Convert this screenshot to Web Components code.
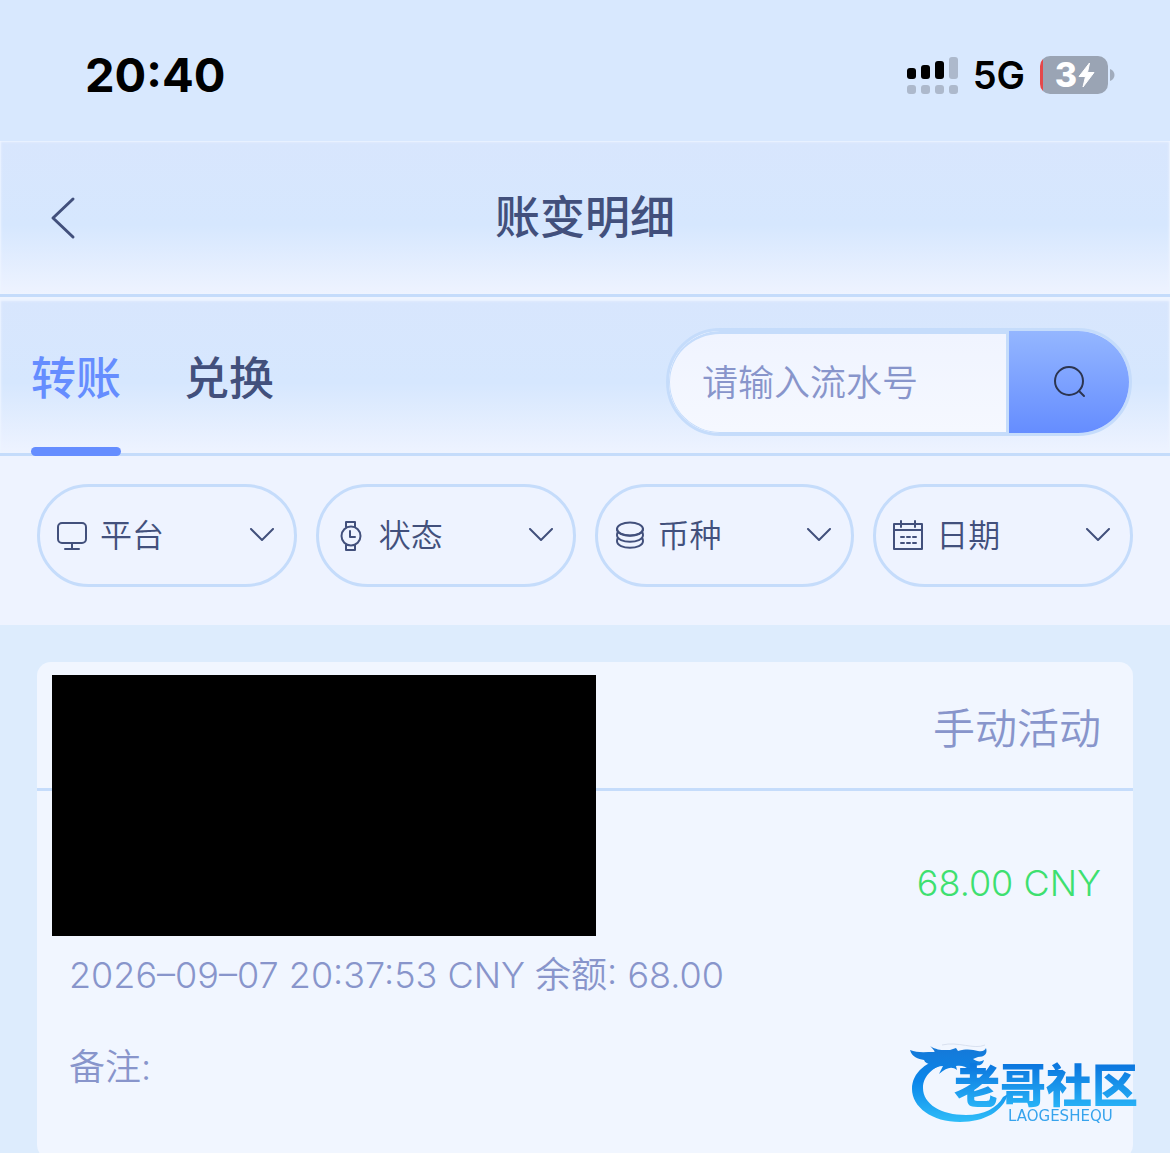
<!DOCTYPE html>
<html lang="zh-CN">
<head>
<meta charset="utf-8">
<meta name="viewport" content="width=device-width, initial-scale=1">
<title>账变明细</title>
<style>
  :root {
    --line: #c5dcfb;
    --ink: #42507c;
    --muted: #8895cb;
    --accent: #658dff;
    --panel: linear-gradient(to bottom, #d8e6fd 0%, #d6e7fe 55%, #eef3ff 100%);
  }
  html, body { margin: 0; height: 100%; }
  body {
    font-family: Inter, "Noto Sans CJK SC", sans-serif;
    color: var(--ink);
    background: #ddecfd;
    overflow: hidden;
  }
</style>
</head>
<body>
<account-page>
  <status-bar slot="top" time="20:40" network="5G" level="3"></status-bar>
  <nav-header slot="top">账变明细</nav-header>
  <tab-strip slot="top">
    <tab-item active>转账</tab-item>
    <tab-item>兑换</tab-item>
    <search-box slot="end" placeholder="请输入流水号"></search-box>
  </tab-strip>
  <filter-row slot="top">
    <filter-select icon="monitor" label="平台"></filter-select>
    <filter-select icon="watch" label="状态"></filter-select>
    <filter-select icon="coins" label="币种"></filter-select>
    <filter-select icon="calendar" label="日期"></filter-select>
  </filter-row>
  <record-card>
    <span slot="kind">手动活动</span>
    <span slot="amount">68.00 CNY</span>
    <span slot="detail">2026–09–07 20:37:53 CNY 余额: 68.00</span>
    <span slot="remark">备注:</span>
  </record-card>
</account-page>
<brand-mark></brand-mark>

<script>
  const define = (name, render) => {
    customElements.define(name, class extends HTMLElement {
      connectedCallback() {
        if (this.shadowRoot) return;
        const root = this.attachShadow({ mode: 'open' });
        root.innerHTML = '<style>:host,*{box-sizing:border-box}svg{display:block;flex:none}button,input,select{font:inherit;color:inherit;margin:0}</style>' + render(this);
      }
    });
  };

  define('account-page', () => `
    <style>
      :host { display: flex; flex-direction: column; height: 100vh; }
      main { flex: 1; min-height: 0; overflow: auto; scrollbar-width: none; padding: 37px 37px 0; }
    </style>
    <slot name="top"></slot>
    <main><slot></slot></main>`);

  define('status-bar', el => `
    <style>
      :host { display: flex; flex: none; align-items: center; justify-content: space-between;
        height: 141px; padding: 8px 55px 0 85px; background: #d8e8fe; color: #000; }
      .time { font-size: 47px; font-weight: 700; }
      .right { display: flex; align-items: center; gap: 15px; }
      .net { font-size: 38px; font-weight: 600; }
      .battery { display: flex; align-items: center; gap: 1px; }
      .cell { display: flex; align-items: center; justify-content: center; gap: 1px; width: 68px; height: 38px; padding-left: 2px;
        border-radius: 10px; color: #fff; font-size: 34px; font-weight: 800;
        background: linear-gradient(to right, #e5484a 3px, #9aa4b4 3px); }
    </style>
    <span class="time">${el.getAttribute('time')}</span>
    <div class="right">
      <svg width="51" height="38" viewBox="0 0 51 38" aria-hidden="true">
        <g fill="#000"><rect y="12" width="9" height="11" rx="3"/><rect x="14" y="9" width="9" height="14" rx="3"/><rect x="28" y="5" width="9" height="18" rx="3"/></g>
        <g fill="#adb9cc"><rect x="42" y="1" width="9" height="22" rx="3"/><rect y="29" width="9" height="9" rx="3"/><rect x="14" y="29" width="9" height="9" rx="3"/><rect x="28" y="29" width="9" height="9" rx="3"/><rect x="42" y="29" width="9" height="9" rx="3"/></g>
      </svg>
      <span class="net">${el.getAttribute('network')}</span>
      <div class="battery">
        <div class="cell"><span>${el.getAttribute('level')}</span>
          <svg width="17" height="26" viewBox="0 0 17 26" aria-hidden="true"><path d="M11.500 1 1 14.500H7.500L5 25 16 10.500H9.500Z" fill="#fff" stroke="#fff" stroke-linejoin="round"/></svg>
        </div>
        <svg width="6" height="12" viewBox="1 0 6 12" aria-hidden="true"><path d="M2 0C8 2 8 10 2 12Z" fill="#a1acbd"/></svg>
      </div>
    </div>`);

  define('nav-header', () => `
    <style>
      :host { display: grid; flex: none; grid-template-columns: 1fr auto 1fr; align-items: center; height: 156px;
        padding: 0 45px; background: var(--panel); border-bottom: 3px solid var(--line);
        box-shadow: inset 0 0 2px 1px #eef4ff; }
      button { display: flex; width: 36px; height: 60px; padding: 0; border: 0; background: none; align-items: center; justify-content: center; }
      h1 { margin: 0; font-size: 45px; font-weight: 500; line-height: 60px; }
    </style>
    <button type="button" aria-label="返回">
      <svg width="26" height="44" viewBox="0 0 26 44"><path d="M23 3 3 22 23 41" fill="none" stroke="#42507c" stroke-width="3" stroke-linecap="round" stroke-linejoin="round"/></svg>
    </button>
    <h1><slot></slot></h1>`);

  define('tab-strip', () => `
    <style>
      :host { display: flex; flex: none; align-items: center; justify-content: space-between; height: 159px;
        padding: 0 38px 0 31px; background: var(--panel); border-bottom: 3px solid var(--line);
        box-shadow: inset 0 3px 2px 1px #eef4ff; }
      nav { display: flex; align-self: stretch; gap: 63px; margin-bottom: -3px; }
      .end { padding-top: 14px; }
    </style>
    <nav><slot></slot></nav>
    <div class="end"><slot name="end"></slot></div>`);

  define('tab-item', () => `
    <style>
      :host { display: flex; }
      button { display: flex; flex-direction: column; align-items: center; justify-content: space-between; padding: 52px 0 0;
        border: 0; background: none; font-size: 45px; font-weight: 500; line-height: 60px; color: var(--ink); }
      i { align-self: stretch; height: 9px; border-radius: 5px; }
      :host([active]) button { color: var(--accent); }
      :host([active]) i { background: var(--accent); }
    </style>
    <button type="button"><slot></slot><i></i></button>`);

  define('search-box', el => `
    <style>
      :host { display: block; }
      form { display: flex; width: 466px; height: 108px; border: 3px solid var(--line); border-radius: 54px; overflow: hidden; background: #eef4ff; }
      input { flex: 1; min-width: 0; height: 102px; padding: 0 32px; border: 1px solid var(--line); border-top-width: 3px; border-right-width: 3px;
        border-radius: 51px 0 0 51px; outline: 0; font-size: 36px; font-weight: 350; background: linear-gradient(#f0f4ff, #f5f8ff); color: var(--ink); }
      input::placeholder { color: var(--muted); opacity: 1; }
      button { display: flex; align-items: center; justify-content: center; width: 120px; padding: 0; border: 0;
        background: linear-gradient(#94b6ff, #658dff); }
    </style>
    <form>
      <input type="text" aria-label="流水号" placeholder="${el.getAttribute('placeholder')}">
      <button type="button" aria-label="搜索">
        <svg width="34" height="34" viewBox="0 0 34 34"><g fill="none" stroke="#2c3550" stroke-width="2" stroke-linecap="round"><circle cx="17" cy="16" r="14"/><path d="m27 26 5 5"/></g></svg>
      </button>
    </form>`);

  define('filter-row', () => `
    <style>
      :host { display: grid; flex: none; grid-template-columns: repeat(4, minmax(0, 1fr)); gap: 19px; padding: 28px 37px 38px; background: #eef3ff; }
    </style>
    <slot></slot>`);

  const icons = {
    monitor: '<rect x="2" y="3" width="28" height="20" rx="4"/><path d="M16 23v5M9 29h14"/>',
    watch: '<circle cx="16" cy="16" r="9.500"/><path d="M11 7V2h9v5M11 25v5h9v-5M15 11v6h5"/>',
    coins: '<ellipse cx="16" cy="9" rx="13" ry="6.500"/><path d="M3 9c0 9 26 9 26 0M4 12c-1 1-1 2-1 3 0 9 26 9 26 0 0-1 0-2-1-3M4 18c-1 1-1 2-1 3 0 9 26 9 26 0 0-1 0-2-1-3"/>',
    calendar: '<path d="M2 4h28v25H2ZM2 10h28M9 1v6M23 1v6M9 17h3M15 17h3M21 17h3M9 23h3M15 23h3M21 23h3"/>'
  };

  define('filter-select', el => `
    <style>
      :host { display: block; }
      label { display: flex; align-items: center; height: 103px; padding: 0 19px 0 16px; border: 3px solid var(--line); border-radius: 52px; }
      select { flex: 1; min-width: 0; height: 60px; margin-left: 12px; padding: 0; border: 0; outline: 0; appearance: none; background: none;
        font-size: 32px; font-weight: 350; color: var(--ink); }
    </style>
    <label>
      <svg width="32" height="32" viewBox="0 0 32 32" aria-hidden="true"><g fill="none" stroke="#42507c" stroke-width="2" stroke-linecap="round" stroke-linejoin="round">${icons[el.getAttribute('icon')]}</g></svg>
      <select aria-label="${el.getAttribute('label')}"><option>${el.getAttribute('label')}</option></select>
      <svg width="26" height="16" viewBox="0 0 26 16" aria-hidden="true"><path d="M2 1 13 12 24 1" fill="none" stroke="#42507c" stroke-width="2" stroke-linecap="round" stroke-linejoin="round"/></svg>
    </label>`);

  define('record-card', () => `
    <style>
      :host { display: block; position: relative; border-radius: 14px; background: #f1f6ff; color: var(--muted); font-weight: 350; }
      header { display: flex; align-items: center; justify-content: flex-end; height: 129px; padding: 0 32px; border-bottom: 3px solid var(--line); font-size: 42px; }
      .body { padding: 46px 32px; font-size: 36px; line-height: 92px; }
      .amount { text-align: right; color: #3ee070; }
      .cover { position: absolute; left: 15px; top: 13px; width: 544px; height: 261px; background: #000; }
    </style>
    <header><slot name="kind"></slot></header>
    <div class="body">
      <div class="amount"><slot name="amount"></slot></div>
      <div><slot name="detail"></slot></div>
      <div><slot name="remark"></slot></div>
    </div>
    <div class="cover"></div>`);

  define('brand-mark', () => `
    <style>
      :host { display: block; position: fixed; right: 18px; bottom: 27px; pointer-events: none; }
      svg { filter: blur(.6px); }
      .name { font: 900 46px "Noto Sans CJK SC", sans-serif; }
      .latin { font: 15px "DejaVu Sans", sans-serif; }
    </style>
    <svg width="244" height="84" viewBox="0 0 244 84">
      <defs>
        <linearGradient id="g" gradientUnits="userSpaceOnUse" x1="0" y1="6" x2="0" y2="80"><stop offset="0" stop-color="#1579d8"/><stop offset=".45" stop-color="#0b86ea"/><stop offset="1" stop-color="#2fbdf8"/></linearGradient>
        <linearGradient id="t" gradientUnits="userSpaceOnUse" x1="0" y1="24" x2="0" y2="64"><stop offset="0" stop-color="#0c78df"/><stop offset="1" stop-color="#27b1f6"/></linearGradient>
      </defs>
      <path fill="url(#g)" d="M42 15C18 18 4 31 4 47c0 18 20 33 48 33 25 0 43-11 48-28l-5 3C89 66 76 73 58 73 33 73 15 62 15 46c0-13 11-22 29-27Z"/>
      <path fill="url(#g)" d="M2 8c7 3 14 2 24 2 2 0-1-3-4-6 8 5 14 4 20 4l6-2 2 3c10-3 15-1 20 0 5 1 7-1 8-3 2 6-2 9-8 9l-5 2c4 3 8 3 11 1-2 8-9 5-14 4 2 2 2 5 0 6-5-4-9-5-14-4l1 4c-5-4-10-3-18 4l4-8c-4 0-8 2-12 4l3-6c-5 1-9-1-10-4-6-1-12-3-14-10Z"/>
      <path fill="none" stroke="#d8e0ef" d="M34 3C50-1 66 8 77 3"/>
      <text class="name" x="46" y="60" fill="url(#t)">老哥社区</text>
      <text class="latin" x="100" y="79" fill="#36a3ed">LAOGESHEQU</text>
    </svg>`);
</script>
</body>
</html>
